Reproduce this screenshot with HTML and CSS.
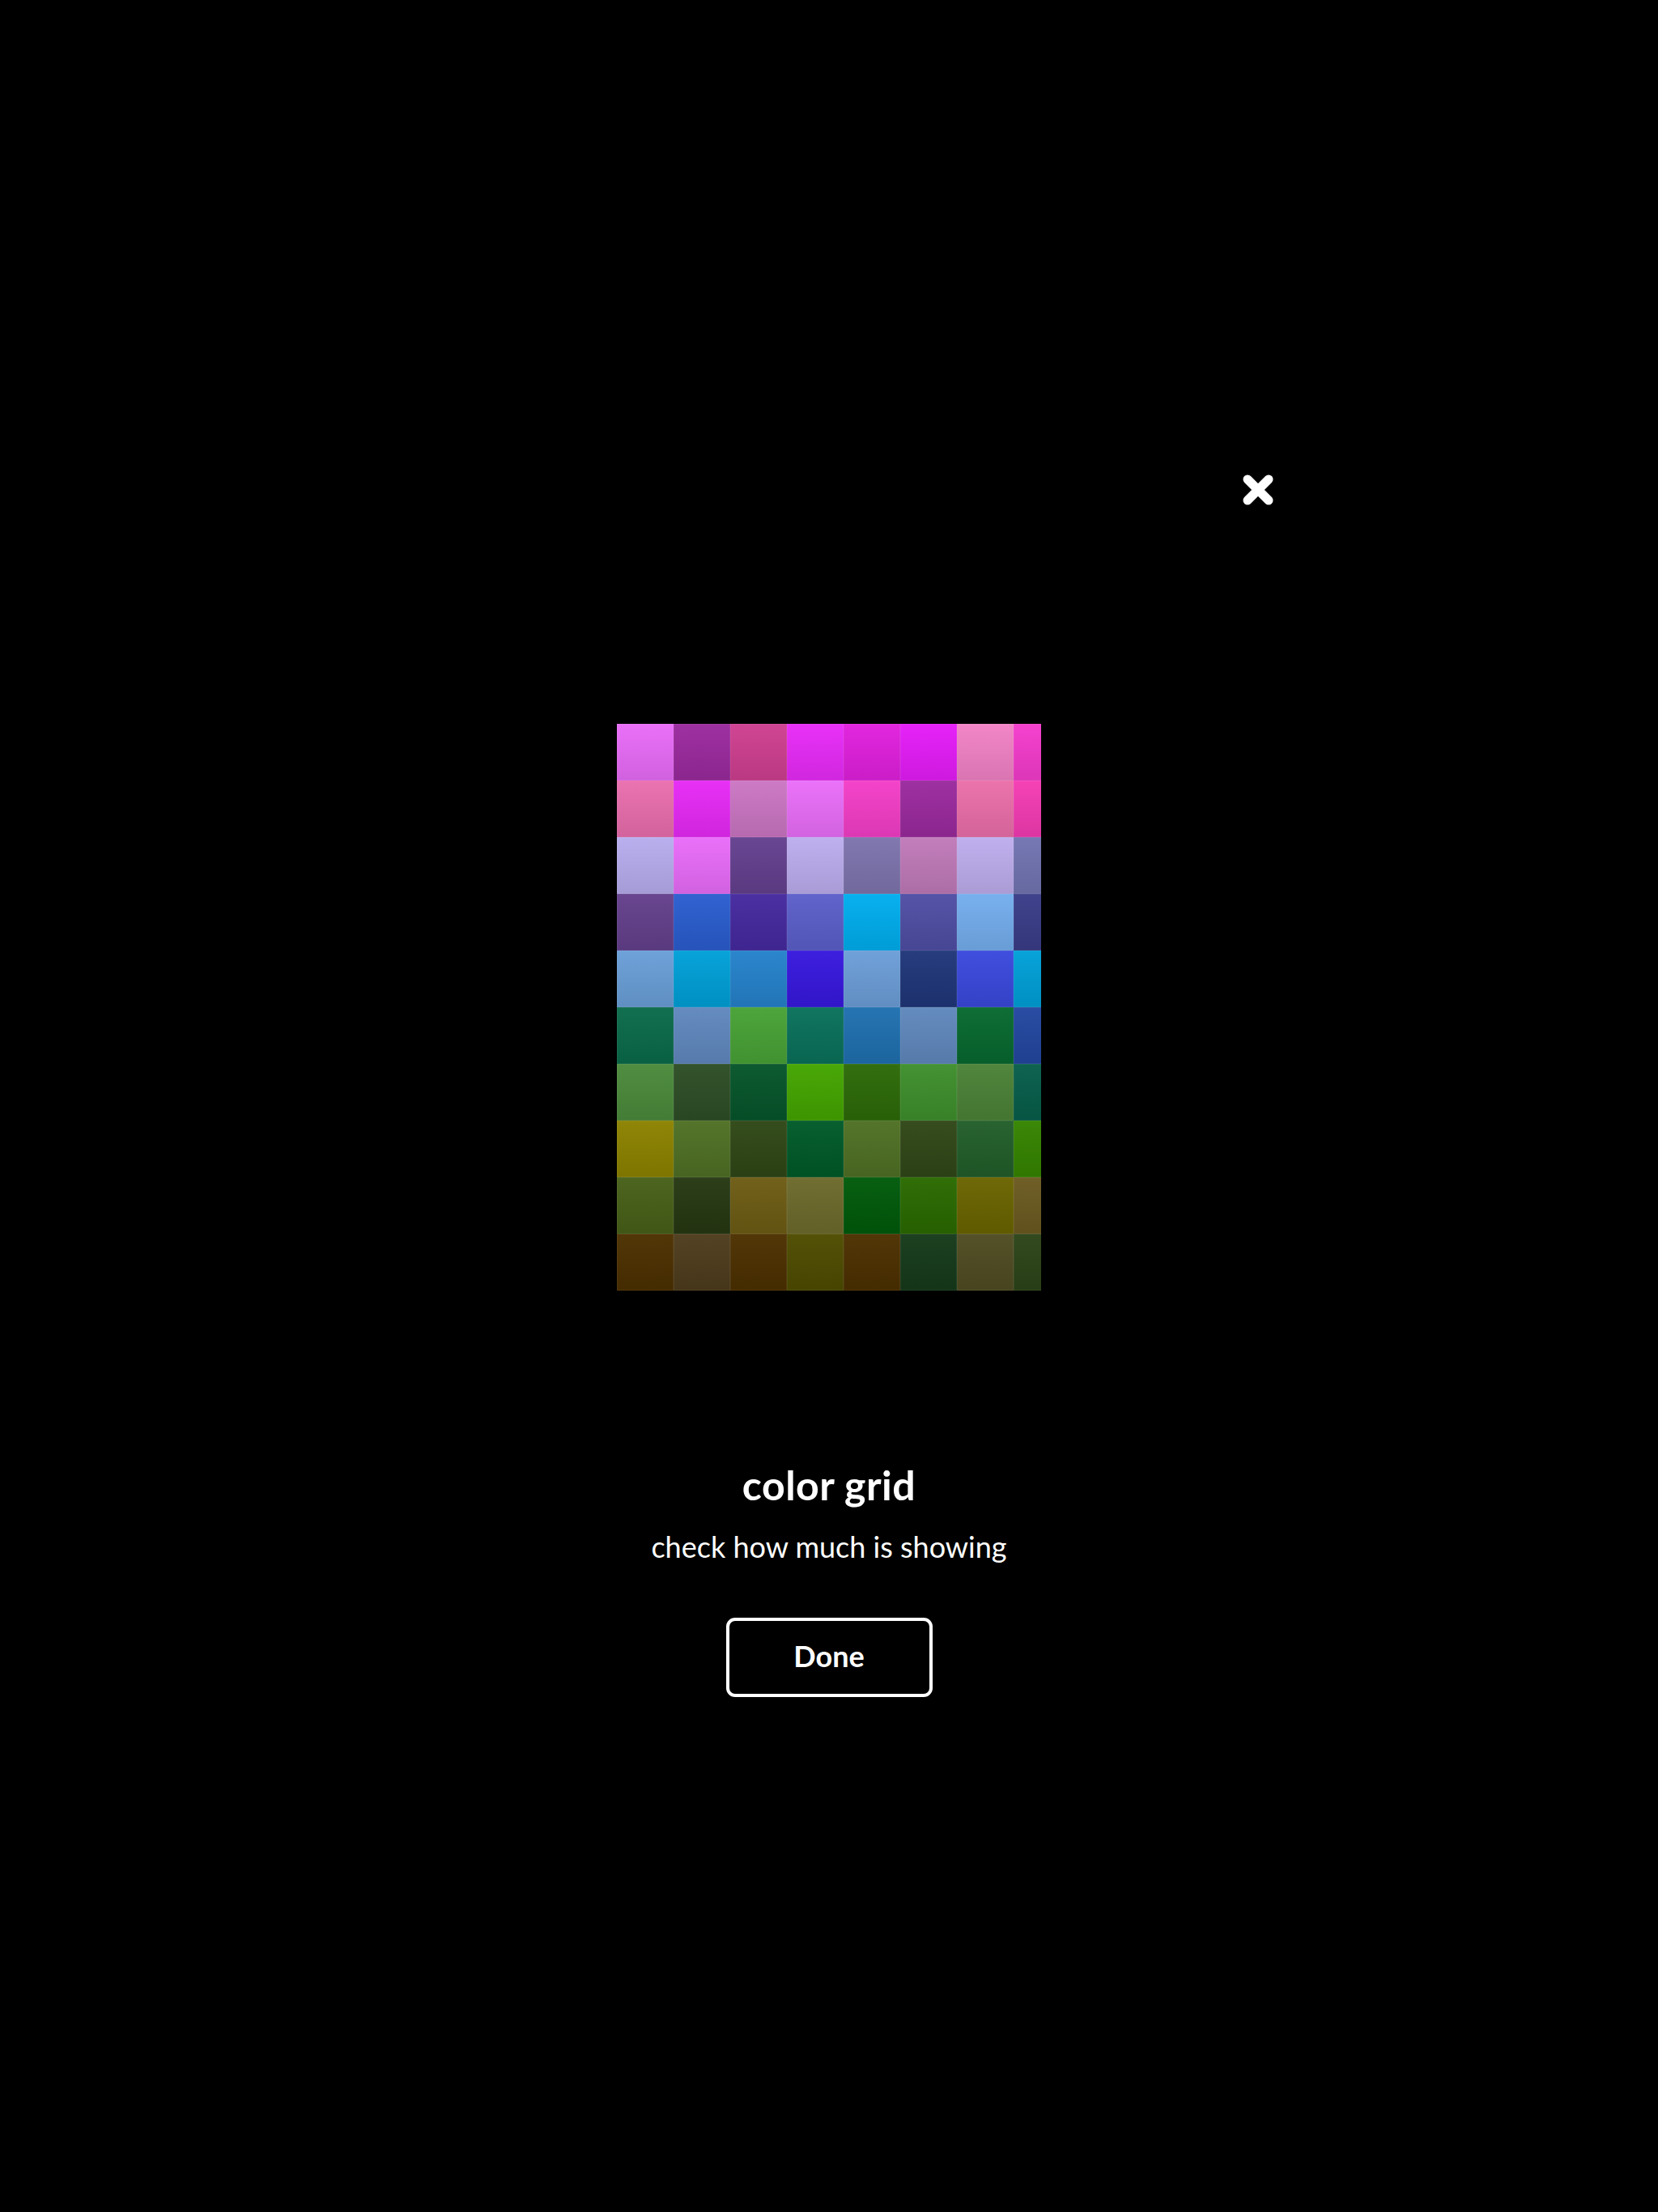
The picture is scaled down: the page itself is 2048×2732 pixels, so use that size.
FILE: index.html
```html
<!DOCTYPE html>
<html lang="en">
<head>
<meta charset="utf-8">
<title>color grid</title>
<link rel="stylesheet" href="styles.css">
</head>
<body>
<div class="modal">
  <div class="header">
    <button class="close" aria-label="Close">
      <svg width="40" height="40" viewBox="0 0 40 40"><path d="M7 7 L33 33 M33 7 L7 33" stroke="#fff" stroke-width="11" stroke-linecap="round" fill="none"/></svg>
    </button>
  </div>
  <div class="grid">
    <div class="cell" style="background-color:#e96cf8"></div><div class="cell" style="background-color:#9b2a9e"></div><div class="cell" style="background-color:#cf3f90"></div><div class="cell" style="background-color:#e82bf8"></div><div class="cell" style="background-color:#e120de"></div><div class="cell" style="background-color:#e51cf8"></div><div class="cell" style="background-color:#f282c6"></div><div class="cell" style="background-color:#f53ccd"></div>
    <div class="cell" style="background-color:#ea6eae"></div><div class="cell" style="background-color:#e72af6"></div><div class="cell" style="background-color:#cb76c3"></div><div class="cell" style="background-color:#ea6ef9"></div><div class="cell" style="background-color:#f43ec8"></div><div class="cell" style="background-color:#9b2a9e"></div><div class="cell" style="background-color:#eb6faa"></div><div class="cell" style="background-color:#f53cb4"></div>
    <div class="cell" style="background-color:#b8adee"></div><div class="cell" style="background-color:#e96cf9"></div><div class="cell" style="background-color:#64408f"></div><div class="cell" style="background-color:#bcadee"></div><div class="cell" style="background-color:#7e74ae"></div><div class="cell" style="background-color:#c07ab9"></div><div class="cell" style="background-color:#beaded"></div><div class="cell" style="background-color:#7274b2"></div>
    <div class="cell" style="background-color:#64408c"></div><div class="cell" style="background-color:#2a5dcf"></div><div class="cell" style="background-color:#45299f"></div><div class="cell" style="background-color:#5b5fca"></div><div class="cell" style="background-color:#00aeee"></div><div class="cell" style="background-color:#4f4ea4"></div><div class="cell" style="background-color:#74aeee"></div><div class="cell" style="background-color:#3a3d88"></div>
    <div class="cell" style="background-color:#6a9fd8"></div><div class="cell" style="background-color:#00a0d8"></div><div class="cell" style="background-color:#2582cb"></div><div class="cell" style="background-color:#3718de"></div><div class="cell" style="background-color:#6c9ed8"></div><div class="cell" style="background-color:#1f3679"></div><div class="cell" style="background-color:#3a49dd"></div><div class="cell" style="background-color:#00a0d8"></div>
    <div class="cell" style="background-color:#0a6b4a"></div><div class="cell" style="background-color:#6088be"></div><div class="cell" style="background-color:#48a236"></div><div class="cell" style="background-color:#09715a"></div><div class="cell" style="background-color:#1f70b0"></div><div class="cell" style="background-color:#6088bd"></div><div class="cell" style="background-color:#07692f"></div><div class="cell" style="background-color:#2347a0"></div>
    <div class="cell" style="background-color:#4b8a3b"></div><div class="cell" style="background-color:#2d4e26"></div><div class="cell" style="background-color:#06552a"></div><div class="cell" style="background-color:#44a500"></div><div class="cell" style="background-color:#2c6a08"></div><div class="cell" style="background-color:#3e8f2c"></div><div class="cell" style="background-color:#4b8237"></div><div class="cell" style="background-color:#075e4a"></div>
    <div class="cell" style="background-color:#8c8200"></div><div class="cell" style="background-color:#4f7024"></div><div class="cell" style="background-color:#2f4716"></div><div class="cell" style="background-color:#005a28"></div><div class="cell" style="background-color:#4f7024"></div><div class="cell" style="background-color:#304717"></div><div class="cell" style="background-color:#225e2a"></div><div class="cell" style="background-color:#358400"></div>
    <div class="cell" style="background-color:#476018"></div><div class="cell" style="background-color:#263812"></div><div class="cell" style="background-color:#6d5c14"></div><div class="cell" style="background-color:#6d6a2c"></div><div class="cell" style="background-color:#005a0a"></div><div class="cell" style="background-color:#2a6a00"></div><div class="cell" style="background-color:#6a6400"></div><div class="cell" style="background-color:#6b5a20"></div>
    <div class="cell" style="background-color:#4c3000"></div><div class="cell" style="background-color:#4e3c1c"></div><div class="cell" style="background-color:#4c3000"></div><div class="cell" style="background-color:#4e4c00"></div><div class="cell" style="background-color:#4c3000"></div><div class="cell" style="background-color:#163a1a"></div><div class="cell" style="background-color:#4f4c22"></div><div class="cell" style="background-color:#2c4418"></div>
  </div>
  <h1 class="title">color grid</h1>
  <p class="subtitle">check how much is showing</p>
  <button class="done">Done</button>
</div>
</body>
</html>
```
FILE: styles.css
```css
html, body {
  margin: 0;
  padding: 0;
  background: #000;
}
body {
  width: 2048px;
  min-height: 2732px;
  font-family: Lato, "Open Sans", sans-serif;
  color: #fff;
}
.modal {
  width: 1100px;
  margin: 0 auto;
  padding-top: 585px;
  display: flex;
  flex-direction: column;
  align-items: center;
}
.header {
  width: 100%;
  height: 40px;
  display: flex;
  justify-content: flex-end;
}
.close {
  width: 40px;
  height: 40px;
  padding: 0;
  margin-right: 0;
  border: 0;
  background: none;
  display: block;
}
.close svg {
  display: block;
}
.grid {
  margin-top: 269px;
  width: 524px;
  height: 700px;
  overflow: hidden;
  display: grid;
  grid-template-columns: repeat(8, 70px);
  grid-auto-rows: 70px;
}
.cell {
  background-image: linear-gradient(rgba(255,255,255,0.03), rgba(0,0,0,0.1));
  box-shadow: inset 0 0 0 1px rgba(255,255,255,0.06);
}
.title {
  margin: 210px 0 0;
  font-size: 50px;
  line-height: 60px;
  font-weight: 700;
  letter-spacing: 0.5px;
}
.subtitle {
  margin: 25px 0 0;
  font-size: 36px;
  line-height: 43px;
  font-weight: 400;
}
.done {
  margin-top: 66px;
  width: 255px;
  height: 98px;
  background: #000;
  border: 4px solid #fff;
  border-radius: 11px;
  color: #fff;
  font-family: Lato, "Open Sans", sans-serif;
  font-size: 36px;
  font-weight: 700;
  padding: 0 0 5px;
}
```
